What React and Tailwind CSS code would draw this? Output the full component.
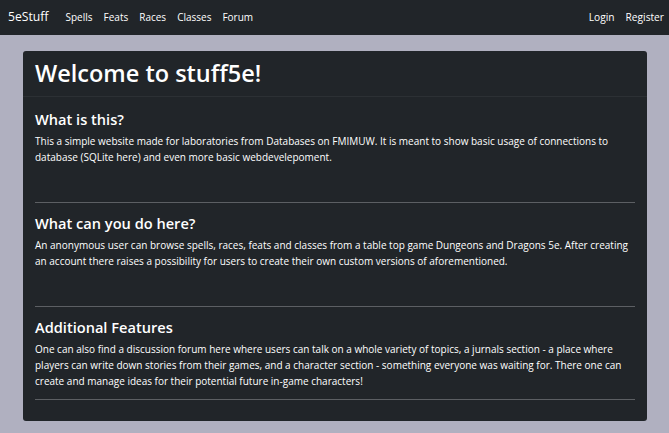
import React from 'react';

const sections = [
  {
    title: 'What is this?',
    text: 'This a simple website made for laboratories from Databases on FMIMUW. It is meant to show basic usage of connections to database (SQLite here) and even more basic webdevelepoment.',
    spaced: true,
  },
  {
    title: 'What can you do here?',
    text: 'An anonymous user can browse spells, races, feats and classes from a table top game Dungeons and Dragons 5e. After creating an account there raises a possibility for users to create their own custom versions of aforementioned.',
    spaced: true,
  },
  {
    title: 'Additional Features',
    text: 'One can also find a discussion forum here where users can talk on a whole variety of topics, a jurnals section - a place where players can write down stories from their games, and a character section - something everyone was waiting for. There one can create and manage ideas for their potential future in-game characters!',
    spaced: false,
  },
];

function Navbar() {
  return (
    <nav className="h-[35px] bg-[#212529] flex items-center justify-between pl-2 pr-[5px] text-white">
      <div className="flex items-center">
        <a className="text-[12.2px] mr-[17px]">5eStuff</a>
        <ul className="flex gap-[11px] text-[10px]">
          <li>Spells</li>
          <li>Feats</li>
          <li>Races</li>
          <li>Classes</li>
          <li>Forum</li>
        </ul>
      </div>
      <ul className="flex gap-[11px] text-[10.2px]">
        <li>Login</li>
        <li>Register</li>
      </ul>
    </nav>
  );
}

function App() {
  return (
    <div className="min-h-screen bg-[#b0b0c0]" style={{ fontFamily: '"Open Sans", sans-serif' }}>
      <Navbar />
      <main className="pt-4 pl-[23px] pr-[22px]">
        <div className="bg-[#212529] rounded-[3px] text-white">
          <div className="px-3 h-[46px] flex items-center border-b border-[#2c3034]">
            <h1 className="text-[23.5px] font-semibold leading-none">Welcome to stuff5e!</h1>
          </div>
          <div className="px-3 pt-3 pb-[11px]">
            {sections.map((s, i) => (
              <div key={i}>
                {i > 0 && <hr className="border-0 border-t border-[#5c5f63] mb-[10px]" />}
                <h2 className="text-[14.6px] font-semibold leading-[20px] mb-1">{s.title}</h2>
                <p className={`text-[10px] leading-[16px] ${s.spaced ? 'mb-[37px]' : 'mb-[10px]'}`}>{s.text}</p>
              </div>
            ))}
            <hr className="border-0 border-t border-[#5c5f63] mb-[10px]" />
          </div>
        </div>
      </main>
    </div>
  );
}

export default App;
